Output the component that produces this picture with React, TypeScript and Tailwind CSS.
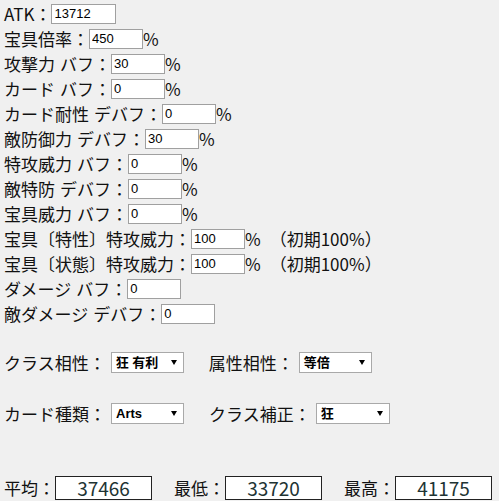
import React from "react";

const jp = "font-['Noto_Sans_CJK_JP',sans-serif]";

function Sp({ w = "w-[5px]" }: { w?: string }) {
  return <span className={"inline-block " + w} />;
}

function Label({ parts }: { parts: string[] }) {
  return (
    <span className="flex items-center whitespace-nowrap">
      {parts.map((p, i) => (
        <React.Fragment key={i}>
          {i > 0 && <Sp />}
          <span>{p}</span>
        </React.Fragment>
      ))}
      <span>：</span>
    </span>
  );
}

function Field({ value, wide }: { value: string; wide?: boolean }) {
  return (
    <input
      readOnly
      defaultValue={value}
      className={
        (wide ? "w-[65px]" : "w-[54px]") +
        " h-[20px] border border-[#a0a0a0] bg-white px-[2px] text-[13px] text-black outline-none font-['Liberation_Sans',sans-serif]"
      }
    />
  );
}

type Row = { parts: string[]; value: string; pct?: boolean; wide?: boolean; extra?: string };

const rows: Row[] = [
  { parts: ["ATK"], value: "13712", wide: true },
  { parts: ["宝具倍率"], value: "450", pct: true },
  { parts: ["攻撃力", "バフ"], value: "30", pct: true },
  { parts: ["カード", "バフ"], value: "0", pct: true },
  { parts: ["カード耐性", "デバフ"], value: "0", pct: true },
  { parts: ["敵防御力", "デバフ"], value: "30", pct: true },
  { parts: ["特攻威力", "バフ"], value: "0", pct: true },
  { parts: ["敵特防", "デバフ"], value: "0", pct: true },
  { parts: ["宝具威力", "バフ"], value: "0", pct: true },
  { parts: ["宝具〔特性〕特攻威力"], value: "100", pct: true, extra: "（初期100%）" },
  { parts: ["宝具〔状態〕特攻威力"], value: "100", pct: true, extra: "（初期100%）" },
  { parts: ["ダメージ", "バフ"], value: "0" },
  { parts: ["敵ダメージ", "デバフ"], value: "0" },
];

function FakeSelect({ text, w }: { text: string; w: string }) {
  return (
    <div
      className={
        w +
        " flex h-[21px] items-center justify-between border border-[#a9a9a9] bg-white pl-[4px] pr-[6px] text-[13px] font-bold text-black font-['Liberation_Sans','Noto_Sans_CJK_JP',sans-serif]"
      }
    >
      <span>{text}</span>
      <svg width="6" height="5" viewBox="0 0 6 5">
        <path d="M0 0H6L3 5Z" fill="#000" />
      </svg>
    </div>
  );
}

function Result({ label, value }: { label: string; value: string }) {
  return (
    <div className="flex items-center">
      <span>{label}：</span>
      <div className="flex h-[24px] w-[97px] items-center justify-center border border-[#222] bg-white text-[19px] text-[#1e3333]">
        {value}
      </div>
    </div>
  );
}

export default function App() {
  return (
    <div className={"min-h-screen bg-[#f0f0f0] pl-[4px] pt-[1px] text-[17px] leading-none text-[#111] " + jp}>
      {rows.map((r, i) => (
        <div key={i} className="flex h-[25px] items-center">
          <Label parts={r.parts} />
          <Field value={r.value} wide={r.wide} />
          {r.pct && <span>%</span>}
          {r.extra && (
            <>
              <Sp w="w-[9px]" />
              <span>{r.extra}</span>
            </>
          )}
        </div>
      ))}

      <div className="mt-[24px] flex h-[25px] items-center">
        <Label parts={["クラス相性"]} />
        <Sp />
        <FakeSelect text="狂 有利" w="w-[73px]" />
        <span className="inline-block w-[25px]" />
        <Label parts={["属性相性"]} />
        <Sp />
        <FakeSelect text="等倍" w="w-[73px]" />
      </div>

      <div className="mt-[26px] flex h-[25px] items-center">
        <Label parts={["カード種類"]} />
        <Sp />
        <FakeSelect text="Arts" w="w-[73px]" />
        <span className="inline-block w-[25px]" />
        <Label parts={["クラス補正"]} />
        <Sp />
        <FakeSelect text="狂" w="w-[74px]" />
      </div>

      <div className="mt-[49px] flex h-[25px] items-center">
        <Result label="平均" value="37466" />
        <span className="inline-block w-[22px]" />
        <Result label="最低" value="33720" />
        <span className="inline-block w-[22px]" />
        <Result label="最高" value="41175" />
      </div>
    </div>
  );
}
